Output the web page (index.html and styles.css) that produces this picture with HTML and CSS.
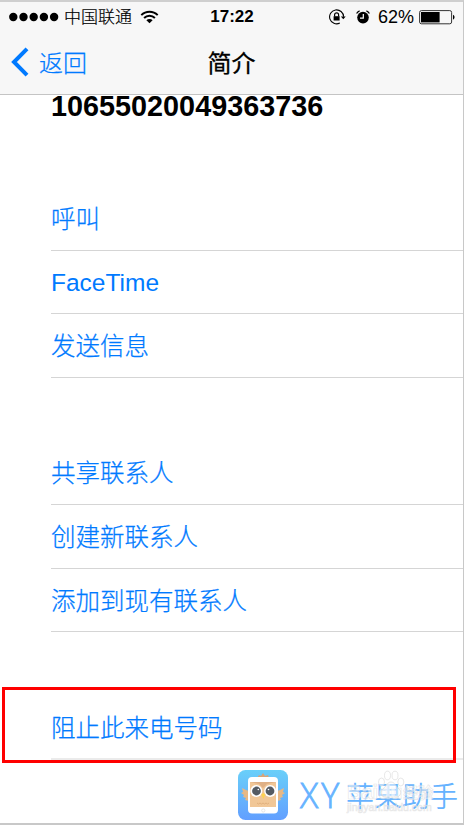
FILE: index.html
```html
<!DOCTYPE html>
<html lang="zh-CN">
<head>
    <meta charset="UTF-8">
    <meta name="viewport" content="width=device-width, initial-scale=1.0">
    <title>简介</title>
    <link rel="stylesheet" href="styles.css">
</head>
<body>
    <div class="phone">
        <header class="header">
            <div class="status-bar">
                <div class="status-left">
                    <svg class="signal" width="50" height="10" viewBox="0 0 50 10">
                        <circle cx="4.3" cy="5" r="4.2"/>
                        <circle cx="14.5" cy="5" r="4.2"/>
                        <circle cx="24.7" cy="5" r="4.2"/>
                        <circle cx="34.9" cy="5" r="4.2"/>
                        <circle cx="45.1" cy="5" r="4.2"/>
                    </svg>
                    <span class="carrier">中国联通</span>
                    <svg class="wifi" width="19" height="14" viewBox="0 0 19 14">
                        <path d="M1.3 5.1a11.6 11.6 0 0 1 16.4 0M4.1 8a7.6 7.6 0 0 1 10.8 0" fill="none" stroke="#000" stroke-width="2"/>
                        <path d="M9.5 13.3L6.4 10.2a4.4 4.4 0 0 1 6.2 0z"/>
                    </svg>
                </div>
                <span class="time">17:22</span>
                <div class="status-right">
                    <svg class="lock" width="18" height="16" viewBox="0 0 18 16">
                        <path d="M10.8 14.1A7 7 0 1 1 14.6 7.8" fill="none" stroke="#000" stroke-width="1.1"/>
                        <path d="M11.9 7.4h4.8l-2.4 2.9z"/>
                        <path d="M5.6 7.6V5.8a2 2 0 0 1 4 0v1.8" fill="none" stroke="#000" stroke-width="1.2"/>
                        <rect x="4.6" y="7.2" width="6" height="4.3"/>
                    </svg>
                    <svg class="alarm" width="14" height="15" viewBox="0 0 14 15">
                        <circle cx="7" cy="7.6" r="5.8"/>
                        <path d="M.6 3.6A5 5 0 0 1 3.6.9M13.4 3.6A5 5 0 0 0 10.4.9" fill="none" stroke="#000" stroke-width="1.2"/>
                        <path d="M7.3 4v4.1H4" fill="none" stroke="#fff" stroke-width="1.2"/>
                    </svg>
                    <span class="percent">62%</span>
                    <svg class="battery" width="36" height="15" viewBox="0 0 36 15">
                        <rect x=".6" y=".6" width="32" height="13.2" rx="1.8" fill="none" stroke="#333" stroke-width="1"/>
                        <rect x="2" y="2" width="18.6" height="10.4"/>
                        <path d="M34 4.8c2 .8 2 4 0 4.8z"/>
                    </svg>
                </div>
            </div>
            <nav class="nav-bar">
                <a class="back">
                    <svg width="18" height="30" viewBox="0 0 18 30">
                        <path d="M16 1.8L3 15l13 13.2" fill="none" stroke="#007aff" stroke-width="4"/>
                    </svg>
                    <span>返回</span>
                </a>
                <h1 class="title">简介</h1>
            </nav>
        </header>

        <main class="content">
            <div class="number">10655020049363736</div>
            <ul class="group">
                <li>呼叫</li>
                <li class="short latin">FaceTime</li>
                <li>发送信息</li>
            </ul>
            <ul class="group">
                <li>共享联系人</li>
                <li>创建新联系人</li>
                <li class="short">添加到现有联系人</li>
            </ul>
            <ul class="group last">
                <li>阻止此来电号码</li>
            </ul>
        </main>

        <footer class="footer">
            <svg class="logo" width="50" height="50" viewBox="0 0 50 50">
                <defs>
                    <linearGradient id="sky" x1="0" y1="0" x2="0" y2="1">
                        <stop offset="0" stop-color="#69cff9"/>
                        <stop offset="1" stop-color="#629fff"/>
                    </linearGradient>
                </defs>
                <rect width="50" height="50" rx="7.5" fill="url(#sky)"/>
                <!-- wings and tuft -->
                <path d="M11 31l-4-1 1-2-3-1 1-2-3-2 2-1-1-4 4 2 3 1zM39 31l4-1-1-2 3-1-1-2 3-2-2-1 1-4-4 2-3 1z" fill="#e6b886"/>
                <path d="M19 8l2-3 2 1 2-3 2 3 3-1 1 3z" fill="#d9a477"/>
                <rect x="10" y="7" width="30" height="36.5" rx="4" fill="#fff"/>
                <rect x="12" y="12" width="26" height="25" fill="#f1c797"/>
                <path d="M12 12h26l-9 2-4 4-4-4z" fill="#dfb085"/>
                <!-- face -->
                <circle cx="18.3" cy="21" r="6" fill="#fff"/>
                <circle cx="32.2" cy="21" r="6" fill="#fff"/>
                <circle cx="18.5" cy="21" r="4.4" fill="#555b62"/>
                <circle cx="32" cy="21" r="4.4" fill="#555b62"/>
                <circle cx="20.3" cy="19.5" r=".8" fill="#fff"/>
                <circle cx="30.5" cy="19.5" r=".8" fill="#fff"/>
                <path d="M23.3 24.5l2-1.5 2 1.5-2 4.5z" fill="#ffd34e"/>
                <path d="M19 33q1.5 2 3 0 1.5 2 3 0 1.5 2 3 0 1.5 2 3 0" fill="none" stroke="#dca976" stroke-width=".8"/>
                <circle cx="25.3" cy="40.5" r="1.6" fill="none" stroke="#ddd" stroke-width=".7"/>
            </svg>
            <div class="brand"><span class="brand-xy">XY</span><span class="brand-name">苹果助手</span></div>
            <div class="watermark">
                <svg class="paw" width="28" height="28" viewBox="0 0 28 28">
                    <ellipse cx="4.5" cy="12" rx="3" ry="4"/>
                    <ellipse cx="10.5" cy="5.5" rx="3" ry="4.3"/>
                    <ellipse cx="18" cy="5.5" rx="3" ry="4.3"/>
                    <ellipse cx="23.8" cy="12" rx="3" ry="4"/>
                    <path d="M14 12c4 0 5 5 8 7s2 8-3 8h-10c-5 0-6-6-3-8s4-7 8-7z"/>
                </svg>
                <div class="mark-name"><span>Bai</span><span class="mark-du">du</span><span class="mark-cn">经验</span></div>
                <div class="mark-url">jingyan.baidu.com</div>
            </div>
        </footer>

        <div class="highlight"></div>
    </div>
</body>
</html>
```
FILE: styles.css
```css
* {
    box-sizing: border-box;
}

body {
    margin: 0;
    background: #fff;
    font-family: "Liberation Sans", "Noto Sans CJK SC", sans-serif;
}

.phone {
    position: relative;
    width: 464px;
    height: 825px;
    border-top: 2px solid #cfcfcf;
    border-right: 1px solid #c8c8c8;
    border-bottom: 2px solid #c8c8c8;
    overflow: hidden;
    display: flex;
    flex-direction: column;
}

/* Header */
.header {
    height: 93px;
    flex: none;
    background: #f7f7f7;
    border-bottom: 1px solid #c4c4c4;
}

.status-bar {
    display: grid;
    grid-template-columns: 1fr auto 1fr;
    align-items: center;
    height: 30px;
    padding: 0 8px 0 9px;
}

.status-left,
.status-right {
    display: flex;
    align-items: center;
}

.status-right {
    justify-content: flex-end;
}

.carrier {
    margin: 0 8px 0 5px;
    font-family: "Noto Sans CJK SC", sans-serif;
    font-size: 17px;
    font-weight: 300;
    line-height: 28px;
    padding-bottom: 2px;
    -webkit-text-stroke: 0.2px #000;
}

.time {
    font-size: 17px;
    font-weight: bold;
}

.alarm {
    margin: 0 8px 0 9px;
}

.percent {
    font-size: 18px;
    margin-right: 5px;
}

.nav-bar {
    display: grid;
    grid-template-columns: 1fr auto 1fr;
    align-items: center;
    height: 60px;
    padding: 0 0 0 11px;
}

.back {
    display: flex;
    align-items: center;
    gap: 10px;
    color: #007aff;
    font-family: "Noto Sans CJK SC", sans-serif;
    font-size: 24px;
    font-weight: 300;
    -webkit-text-stroke: 0.25px #007aff;
}

.back span {
    padding-bottom: 2px;
}

.title {
    margin: 0 11px 2px 0;
    font-family: "Noto Sans CJK SC", sans-serif;
    font-size: 24px;
    font-weight: 400;
    -webkit-text-stroke: 0.3px #000;
}

/* Contact */
.content {
    padding-left: 51px;
}

.number {
    height: 97px;
    margin-top: -5px;
    font-size: 28.8px;
    line-height: 33px;
    font-weight: bold;
}

.group {
    list-style: none;
    margin: 0 0 63px;
    padding: 0;
}

.group li {
    height: 64px;
    border-bottom: 1px solid #d5d5d5;
    font-family: "Noto Sans CJK SC", sans-serif;
    font-size: 24.5px;
    font-weight: 300;
    line-height: 62px;
    color: #007aff;
    -webkit-text-stroke: 0.25px #007aff;
}

.group li.short {
    height: 63px;
}

.group li.latin {
    font-family: "Liberation Sans", sans-serif;
    font-weight: 400;
    line-height: 64px;
    -webkit-text-stroke: 0;
}

.group.last {
    margin: 1px 0 0;
}

.group.last li {
    height: 65px;
    line-height: 63px;
    border-bottom: 2px solid #ebebeb;
}

/* Footer */
.footer {
    position: relative;
    display: flex;
    align-items: center;
    flex: none;
    height: 50px;
    margin: 10px 0 0 238px;
}

.brand {
    display: flex;
    align-items: center;
    margin-left: 12px;
    line-height: 50px;
    color: #66b3ff;
    white-space: nowrap;
}

.brand-xy {
    width: 46px;
    font-family: "Open Sans", sans-serif;
    font-size: 34px;
    font-weight: 300;
    letter-spacing: 3px;
    -webkit-text-stroke: 0.8px #66b3ff;
}

.brand-name {
    font-family: "Noto Sans CJK SC", sans-serif;
    font-size: 28px;
    font-weight: 350;
}

.watermark {
    position: absolute;
    left: 109px;
    top: 0;
    width: 100px;
    color: rgba(255, 255, 255, 0.5);
    -webkit-text-stroke: 0.7px rgba(215, 215, 215, 0.6);
}

.paw {
    position: absolute;
    left: 30px;
    top: 0;
    fill: rgba(255, 255, 255, 0.5);
    stroke: rgba(215, 215, 215, 0.6);
}

.mark-name {
    display: flex;
    height: 31px;
    padding-top: 13px;
    font-size: 20px;
    font-weight: bold;
    line-height: 18px;
    white-space: nowrap;
}

.mark-du {
    width: 25px;
}

.mark-cn {
    font-family: "Noto Sans CJK SC", sans-serif;
    font-size: 15px;
}

.mark-url {
    font-size: 10.5px;
    line-height: 12px;
}

/* Red frame over the block row */
.highlight {
    position: absolute;
    left: 2px;
    top: 685px;
    width: 454px;
    height: 76px;
    border: 3px solid #f00;
}
```
